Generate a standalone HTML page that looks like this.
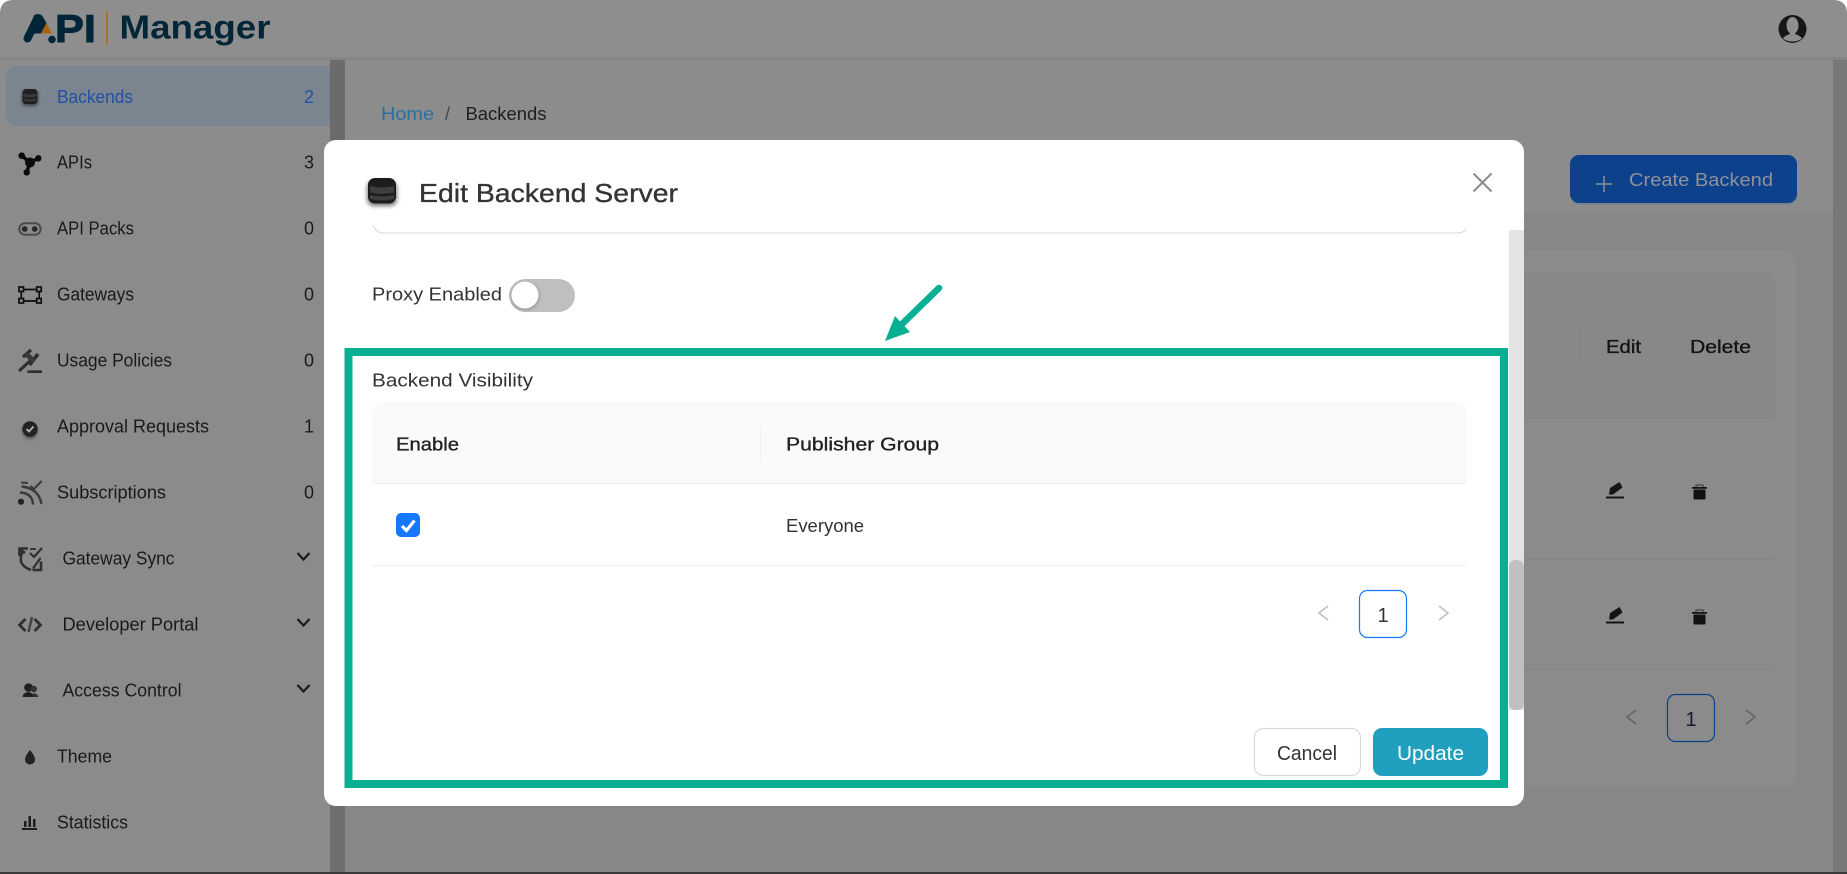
<!DOCTYPE html>
<html lang="en">
<head>
<meta charset="utf-8">
<title>Edit Backend Server</title>
<style>
html,body{margin:0;padding:0;width:1847px;height:874px;overflow:hidden;background:#fff}
svg{display:block}
text{font-family:"Liberation Sans",Arial,sans-serif;font-size:18px;fill:#1a1a1a}
.nav{font-size:18px}
.h{font-weight:bold}
.m{stroke-width:.35px}
</style>
</head>
<body>
<svg width="1847" height="874" viewBox="0 0 1847 874" xmlns="http://www.w3.org/2000/svg">
<defs>
<filter id="sh" x="-40%" y="-40%" width="180%" height="200%"><feGaussianBlur stdDeviation="1.6"/></filter>
<filter id="sh2" x="-40%" y="-40%" width="180%" height="200%"><feGaussianBlur stdDeviation="2.2"/></filter>
</defs>

<!-- page under overlay -->
<rect width="1847" height="874" fill="#fff"/>
<path d="M14 0H1833Q1847 0 1847 14V874H0V14Q0 0 14 0Z" fill="#8c8c8c"/>
<path d="M14 0H1833Q1847 0 1847 14V58H0V14Q0 0 14 0Z" fill="#8e8e8e"/>
<rect x="0" y="57" width="1847" height="3" fill="#858585"/>
<!-- sidebar bg -->
<rect x="0" y="60" width="330" height="812" fill="#8b8b8b"/>
<rect x="330" y="60" width="15" height="812" fill="#6f6f6f"/>
<path d="M330 68Q330 60 337 60Q345 60 345 68V140H330Z" fill="#6b6b6b"/>
<!-- main -->
<rect x="345" y="60" width="1488" height="153" fill="#8c8c8c"/>
<rect x="345" y="213" width="1488" height="659" fill="#878787"/>
<rect x="1833" y="60" width="14" height="812" fill="#787878"/>
<rect x="0" y="872" width="1847" height="2" fill="#3a3a3a"/>

<!-- logo -->
<path d="M27.500 38.500L37 19" fill="none" stroke="#032538" stroke-width="8" stroke-linecap="round"/>
<path d="M33.500 15.500Q38 12.500 42 15.500L46.500 23L41 33.500L33 33.500Z" fill="#032538"/>
<path d="M46.500 23L52 33.500H41Z" fill="#a8640c"/>
<circle cx="52" cy="39.500" r="3.800" fill="#032538"/>
<text x="55" y="42" class="h" style="font-size:39px;fill:#032538;stroke:#032538;stroke-width:.9px" textLength="41" lengthAdjust="spacingAndGlyphs">PI</text>
<rect x="106" y="11" width="2" height="34" fill="#a8742c"/>
<text x="119.500" y="38.500" class="h" style="font-size:33px;fill:#032538" textLength="151" lengthAdjust="spacingAndGlyphs">Manager</text>

<!-- user -->
<circle cx="1792.500" cy="29" r="14" fill="#161616"/>
<ellipse cx="1792.500" cy="25.500" rx="6" ry="8.500" fill="#8e8e8e"/>
<path d="M1789.500 31L1790 34Q1784 36 1783 38.500Q1787 41.500 1792.500 41.500Q1798 41.500 1802 38.500Q1801 36 1795 34L1795.500 31Z" fill="#8e8e8e"/>

<!-- active nav -->
<path d="M18 66H330V126H18Q6 126 6 114V78Q6 66 18 66Z" fill="#7a8590"/>

<!-- nav text -->
<text class="nav" x="57" y="103" style="fill:#2450a6" textLength="76" lengthAdjust="spacingAndGlyphs">Backends</text>
<text class="nav" x="57" y="168.500" textLength="35" lengthAdjust="spacingAndGlyphs">APIs</text>
<text class="nav" x="57" y="234.500" textLength="77" lengthAdjust="spacingAndGlyphs">API Packs</text>
<text class="nav" x="57" y="300.500" textLength="77" lengthAdjust="spacingAndGlyphs">Gateways</text>
<text class="nav" x="57" y="366.500" textLength="115" lengthAdjust="spacingAndGlyphs">Usage Policies</text>
<text class="nav" x="57" y="432.500" textLength="152" lengthAdjust="spacingAndGlyphs">Approval Requests</text>
<text class="nav" x="57" y="498.500" textLength="109" lengthAdjust="spacingAndGlyphs">Subscriptions</text>
<text class="nav" x="62.500" y="564.500" textLength="112" lengthAdjust="spacingAndGlyphs">Gateway Sync</text>
<text class="nav" x="62.500" y="630.500" textLength="136" lengthAdjust="spacingAndGlyphs">Developer Portal</text>
<text class="nav" x="62.500" y="696.500" textLength="119" lengthAdjust="spacingAndGlyphs">Access Control</text>
<text class="nav" x="57" y="762.500" textLength="55" lengthAdjust="spacingAndGlyphs">Theme</text>
<text class="nav" x="57" y="828.500" textLength="71" lengthAdjust="spacingAndGlyphs">Statistics</text>

<!-- counts -->
<g text-anchor="end">
<text x="314" y="103" style="fill:#2450a6">2</text>
<text x="314" y="168.500">3</text>
<text x="314" y="234.500">0</text>
<text x="314" y="300.500">0</text>
<text x="314" y="366.500">0</text>
<text x="314" y="432.500">1</text>
<text x="314" y="498.500">0</text>
</g>

<!-- chevrons -->
<g fill="none" stroke="#1a1a1a" stroke-width="2.200">
<path d="M297.500 553L303.500 559.500L309.500 553"/>
<path d="M297.500 619L303.500 625.500L309.500 619"/>
<path d="M297.500 685L303.500 691.500L309.500 685"/>
</g>

<!-- nav icons -->
<!-- db -->
<g>
<rect x="22" y="91" width="16" height="15" rx="4" fill="#444" filter="url(#sh)"/>
<rect x="22.500" y="89" width="15" height="15" rx="3.500" fill="#1f1f1f"/>
<path d="M23.500 93.500Q30 95.500 36.500 93.500V96.500Q30 98.500 23.500 96.500ZM23.500 98.500Q30 100.500 36.500 98.500V100.500Q30 102.500 23.500 100.500Z" fill="#3b3b3b"/>
</g>
<!-- APIs -->
<g stroke="#0c0c0c" stroke-width="3.500" fill="none"><path d="M21.700 155.700L30 162.500L38.300 158.300M30 162.500L26.700 172.300"/></g>
<g fill="#0c0c0c"><circle cx="21.700" cy="155.700" r="3.300"/><circle cx="38.300" cy="158.300" r="3.200"/><circle cx="26.700" cy="172.300" r="3.200"/><circle cx="30" cy="162.500" r="5"/></g>
<!-- API packs -->
<rect x="19.300" y="223.300" width="21.400" height="11.400" rx="5.700" fill="none" stroke="#4a4a4a" stroke-width="2"/>
<circle cx="24.700" cy="229" r="2.900" fill="#2a2a2a"/><circle cx="34.700" cy="229" r="2.900" fill="#2a2a2a"/>
<!-- gateways -->
<g fill="none" stroke="#0e0e0e" stroke-width="1.700">
<path d="M23.500 289.500H37M23.500 301H37M21.300 292V298.500M39.200 292V298.500"/>
<rect x="19" y="287" width="4.500" height="4.500"/><rect x="36.700" y="287" width="4.500" height="4.500"/>
<rect x="19" y="298.500" width="4.500" height="4.500"/><rect x="36.700" y="298.500" width="4.500" height="4.500"/>
</g>
<!-- usage -->
<g stroke="#2e2e2e" fill="none">
<path d="M19 371L31 360" stroke-width="3"/>
<path d="M23 357L31 350" stroke-width="3.200"/>
<path d="M29.500 365L38 354" stroke-width="3.600"/>
<path d="M26 354L34 361" stroke-width="5" stroke="#3a3a3a"/>
<path d="M27.300 371.700H42" stroke-width="2.600"/>
</g>
<!-- approval -->
<circle cx="30" cy="431.500" r="7.500" fill="#555" filter="url(#sh)"/>
<circle cx="30" cy="429" r="7.700" fill="#222"/>
<path d="M26.500 429L29 431.500L33.500 426.500" fill="none" stroke="#b5b5b5" stroke-width="1.800"/>
<!-- subs -->
<circle cx="21" cy="501.700" r="3.100" fill="#222"/>
<g fill="none" stroke="#3a3a3a" stroke-width="2.400">
<path d="M20 492.500Q32.500 493 33 504.500"/><path d="M21.500 486.500Q38.500 488 41.500 504"/>
<path d="M21 482.500L28 483" stroke-width="2"/>
<path d="M30.500 486L34 489L41.700 481" stroke-width="2"/>
</g>
<!-- sync -->
<g fill="none" stroke="#2f2f2f" stroke-width="2.600">
<path d="M19.500 556V548.500H28"/>
<path d="M20 549.500L25 553"/>
<path d="M22.500 552Q16.500 565 31 570"/>
<path d="M41 561.500V570H32.500"/>
<path d="M40.500 558L33 568.500" stroke-width="2.200"/>
<path d="M30 553L34 557L42 548" stroke-width="2.200"/>
<path d="M30 549H36" stroke-width="1.800"/>
</g>
<!-- dev -->
<g fill="none" stroke="#2f2f2f" stroke-width="2.800">
<path d="M25.500 619L19.500 625L25.500 631"/><path d="M34.500 619L40.500 625L34.500 631"/><path d="M32 617L28.500 632" stroke-width="2.600" stroke="#444"/>
</g>
<!-- access -->
<g fill="#1f1f1f">
<circle cx="28.500" cy="687.500" r="4.300"/><path d="M22.500 697Q23 692.500 28.500 692Q33 692.500 34 697Z"/>
<circle cx="33.800" cy="689" r="3.200" fill="#333"/><path d="M33 693Q37.500 693.500 38.500 697H33Z" fill="#333"/>
</g>
<!-- theme -->
<path d="M30 750Q35 756 35 759.500A5 5 0 0 1 25 759.500Q25 756 30 750Z" fill="#222"/>
<!-- stats -->
<g fill="#1c1c1c"><rect x="22" y="828" width="15" height="2"/><rect x="24" y="821" width="2.500" height="6"/><rect x="28.500" y="816" width="2.500" height="11"/><rect x="33" y="819" width="2.500" height="8"/></g>

<!-- breadcrumb -->
<text x="381" y="120" style="fill:#2c6f9f" textLength="53" lengthAdjust="spacingAndGlyphs">Home</text>
<text x="445" y="120" style="fill:#454545">/</text>
<text x="465.500" y="120" style="fill:#1f1f1f" textLength="81" lengthAdjust="spacingAndGlyphs">Backends</text>

<!-- create button -->
<rect x="1571" y="157" width="226" height="48" rx="9" fill="#7c8290"/>
<rect x="1570" y="155" width="227" height="48" rx="9" fill="#0d418c"/>
<path d="M1596 184H1612M1604 176V192" stroke="#8d9096" stroke-width="1.500"/>
<text x="1629" y="186" style="fill:#8f9299" textLength="144" lengthAdjust="spacingAndGlyphs">Create Backend</text>

<!-- card -->
<rect x="360" y="250" width="1436" height="537" rx="12" fill="#8b8b8b"/>
<path d="M360 272H1765Q1775 272 1775 282V418H360Z" fill="#888"/>
<rect x="360" y="418" width="1415" height="1" fill="#848484"/>
<rect x="360" y="559" width="1415" height="1" fill="#848484"/>
<rect x="360" y="669" width="1415" height="1" fill="#848484"/>
<rect x="1580" y="328" width="1" height="33" fill="#848484"/>
<rect x="1665" y="328" width="1" height="33" fill="#848484"/>
<text x="1606" y="353" class="m" style="fill:#141414;stroke:#141414" textLength="35" lengthAdjust="spacingAndGlyphs">Edit</text>
<text x="1690" y="353" class="m" style="fill:#141414;stroke:#141414" textLength="61" lengthAdjust="spacingAndGlyphs">Delete</text>

<!-- row icons -->
<g fill="#141414">
<path d="M1609 494.500L1610 488L1619.500 482L1622.500 487.500L1613 494.500Z"/>
<rect x="1606" y="496.500" width="18" height="2"/>
<path d="M1609 619.500L1610 613L1619.500 607L1622.500 612.500L1613 619.500Z"/>
<rect x="1606" y="621.500" width="18" height="2"/>
</g>
<g fill="#121212">
<rect x="1692" y="487" width="15" height="1.800"/><rect x="1693.500" y="489.500" width="12" height="10" rx="1"/><path d="M1696 487V485H1703V487" fill="none" stroke="#333" stroke-width="1"/>
<rect x="1692" y="612" width="15" height="1.800"/><rect x="1693.500" y="614.500" width="12" height="10" rx="1"/><path d="M1696 612V610H1703V612" fill="none" stroke="#333" stroke-width="1"/>
</g>

<!-- card pager -->
<rect x="1667.500" y="694.500" width="47" height="47" rx="8" fill="none" stroke="#0d418c" stroke-width="1.200"/>
<text x="1691" y="726" text-anchor="middle" style="fill:#111a3a;font-size:20px">1</text>
<path d="M1636 710L1627 717L1636 724M1746 710L1755 717L1746 724" fill="none" stroke="#626262" stroke-width="1.500"/>

<!-- modal -->
<rect x="324" y="140" width="1200" height="666" rx="12" fill="#fff"/>
<!-- modal header -->
<rect x="367" y="181" width="30" height="25" rx="7" fill="#777" filter="url(#sh2)"/>
<rect x="368" y="178" width="28" height="25.500" rx="7" fill="#1c1c1c"/>
<path d="M370 186Q382 189 394 186V192.500Q382 195.500 370 192.500ZM370 195Q382 198 394 195V199Q382 202 370 199Z" fill="#3e3e3e"/>
<text x="419" y="202" class="m" style="font-size:26px;fill:#343434;stroke:#343434" textLength="259" lengthAdjust="spacingAndGlyphs">Edit Backend Server</text>
<path d="M1473.500 173.500L1491.500 191.500M1491.500 173.500L1473.500 191.500" stroke="#8c8c8c" stroke-width="2" fill="none"/>

<!-- scrollbar -->
<rect x="1509" y="230" width="15" height="480" fill="#e4e4e4"/>
<path d="M1509 568Q1509 560 1516.500 560Q1524 560 1524 568V703Q1524 710 1516.500 710Q1509 710 1509 703Z" fill="#c0c0c0"/>

<!-- input remains -->
<path d="M373 225Q376 233 384 233H1456Q1464 233 1466 229" fill="none" stroke="#d9d9d9" stroke-width="1"/>

<!-- proxy -->
<text x="372" y="300.500" style="fill:#333" textLength="130" lengthAdjust="spacingAndGlyphs">Proxy Enabled</text>
<rect x="509" y="279" width="66" height="33" rx="16.500" fill="#bfbfbf"/>
<circle cx="525.500" cy="296" r="14" fill="#555" opacity=".4" filter="url(#sh)"/>
<circle cx="525" cy="295" r="13.500" fill="#fff"/>

<!-- arrow -->
<path d="M939 288L900 326" stroke="#07b092" stroke-width="6.500" stroke-linecap="round" fill="none"/>
<path d="M885 341L895 316L910 332Z" fill="#07b092"/>

<!-- table -->
<text x="372" y="386.500" style="fill:#333" textLength="161" lengthAdjust="spacingAndGlyphs">Backend Visibility</text>
<path d="M372 414Q372 402 384 402H1455Q1467 402 1467 414V483H372Z" fill="#fafafa"/>
<rect x="372" y="483" width="1095" height="1" fill="#f0f0f0"/>
<rect x="372" y="565" width="1095" height="1" fill="#f0f0f0"/>
<rect x="760" y="427" width="1" height="33" fill="#f0f0f0"/>
<text x="396" y="450.500" class="m" style="fill:#222;stroke:#222" textLength="63" lengthAdjust="spacingAndGlyphs">Enable</text>
<text x="786" y="450.500" class="m" style="fill:#222;stroke:#222" textLength="153" lengthAdjust="spacingAndGlyphs">Publisher Group</text>
<text x="786" y="532" style="fill:#333" textLength="78" lengthAdjust="spacingAndGlyphs">Everyone</text>
<rect x="396" y="513" width="24" height="24" rx="5" fill="#1677ff"/>
<path d="M402 526L406.500 530.500L414.500 520.500" fill="none" stroke="#fff" stroke-width="3.200"/>

<!-- modal pager -->
<rect x="1359.500" y="590.500" width="47" height="47" rx="8" fill="#fff" stroke="#1677ff" stroke-width="1.200"/>
<text x="1383" y="622" text-anchor="middle" style="fill:#333;font-size:20px">1</text>
<path d="M1328 606L1319 613L1328 620" fill="none" stroke="#bdbdbd" stroke-width="1.500"/>
<path d="M1439 606L1448 613L1439 620" fill="none" stroke="#bdbdbd" stroke-width="1.500"/>

<!-- buttons -->
<rect x="1254.500" y="728.500" width="106" height="47" rx="9" fill="#fff" stroke="#d9d9d9" stroke-width="1.200"/>
<text x="1277" y="760" style="font-size:20px;fill:#333" textLength="60" lengthAdjust="spacingAndGlyphs">Cancel</text>
<rect x="1373" y="728" width="115" height="48" rx="9" fill="#209fbf"/>
<text x="1397" y="760" style="font-size:20px;fill:#fff" textLength="67" lengthAdjust="spacingAndGlyphs">Update</text>

<!-- green highlight -->
<rect x="348.500" y="352" width="1155.500" height="432" fill="none" stroke="#07b092" stroke-width="8"/>
</svg>
</body>
</html>
